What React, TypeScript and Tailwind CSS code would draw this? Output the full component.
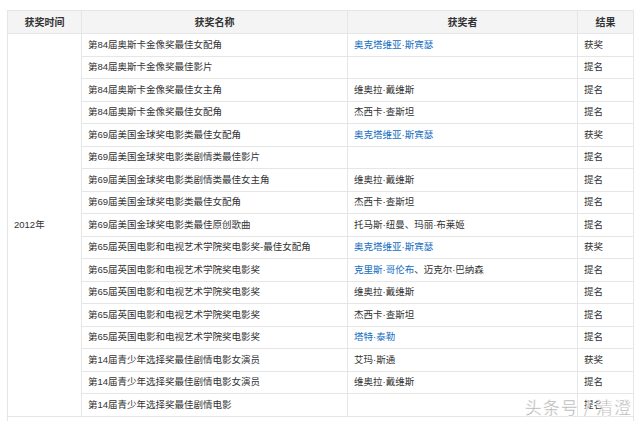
import React from 'react';

type Row = {
  award: string;
  winner?: React.ReactNode;
  result: string;
};

const Link: React.FC<{ children: React.ReactNode }> = ({ children }) => (
  <a className="text-[#136ec2] no-underline">{children}</a>
);

const rows: Row[] = [
  { award: '第84届奥斯卡金像奖最佳女配角', winner: <Link>奥克塔维亚·斯宾瑟</Link>, result: '获奖' },
  { award: '第84届奥斯卡金像奖最佳影片', result: '提名' },
  { award: '第84届奥斯卡金像奖最佳女主角', winner: '维奥拉·戴维斯', result: '提名' },
  { award: '第84届奥斯卡金像奖最佳女配角', winner: '杰西卡·查斯坦', result: '提名' },
  { award: '第69届美国金球奖电影类最佳女配角', winner: <Link>奥克塔维亚·斯宾瑟</Link>, result: '获奖' },
  { award: '第69届美国金球奖电影类剧情类最佳影片', result: '提名' },
  { award: '第69届美国金球奖电影类剧情类最佳女主角', winner: '维奥拉·戴维斯', result: '提名' },
  { award: '第69届美国金球奖电影类最佳女配角', winner: '杰西卡·查斯坦', result: '提名' },
  { award: '第69届美国金球奖电影类最佳原创歌曲', winner: '托马斯·纽曼、玛丽·布莱姬', result: '提名' },
  { award: '第65届英国电影和电视艺术学院奖电影奖-最佳女配角', winner: <Link>奥克塔维亚·斯宾瑟</Link>, result: '获奖' },
  {
    award: '第65届英国电影和电视艺术学院奖电影奖',
    winner: (
      <>
        <Link>克里斯·哥伦布</Link>、迈克尔·巴纳森
      </>
    ),
    result: '提名',
  },
  { award: '第65届英国电影和电视艺术学院奖电影奖', winner: '维奥拉·戴维斯', result: '提名' },
  { award: '第65届英国电影和电视艺术学院奖电影奖', winner: '杰西卡·查斯坦', result: '提名' },
  { award: '第65届英国电影和电视艺术学院奖电影奖', winner: <Link>塔特·泰勒</Link>, result: '提名' },
  { award: '第14届青少年选择奖最佳剧情电影女演员', winner: '艾玛·斯通', result: '获奖' },
  { award: '第14届青少年选择奖最佳剧情电影女演员', winner: '维奥拉·戴维斯', result: '提名' },
  { award: '第14届青少年选择奖最佳剧情电影', result: '提名' },
];

const cell = 'border border-[#e6e6e6] px-[6px] h-[22.5px] p-0 align-middle whitespace-nowrap';

export default function App() {
  return (
    <div
      className="relative w-[640px] h-[421px] overflow-hidden bg-white pt-[10px] pl-[7px] text-[9.5px] text-[#333]"
      style={{ fontFamily: '"Liberation Sans", "Noto Sans CJK SC", sans-serif' }}
    >
      <table className="border-collapse table-fixed w-[626px] border border-[#dcdcdc]">
        <colgroup>
          <col className="w-[74px]" />
          <col className="w-[266px]" />
          <col className="w-[230px]" />
          <col className="w-[56px]" />
        </colgroup>
        <thead>
          <tr className="bg-[#f4f4f4]">
            {['获奖时间', '获奖名称', '获奖者', '结果'].map((h) => (
              <th key={h} className="border border-[#e6e6e6] h-[23px] p-0 text-[10px] font-bold text-center">
                {h}
              </th>
            ))}
          </tr>
        </thead>
        <tbody>
          {rows.map((r, i) => (
            <tr key={i}>
              {i === 0 && (
                <td rowSpan={rows.length} className={cell}>
                  2012年
                </td>
              )}
              <td className={cell}>{r.award}</td>
              <td className={cell}>{r.winner}</td>
              <td className={cell}>{r.result}</td>
            </tr>
          ))}
          <tr>
            <td colSpan={4} className={cell}></td>
          </tr>
        </tbody>
      </table>

      <div
        className="absolute right-[8px] bottom-[2px] text-[17px] tracking-[1px] text-[#b0b0b0]"
        style={{ fontFamily: '"Noto Sans CJK SC", sans-serif', WebkitTextStroke: '0.4px #fff', textShadow: '0 0 2px #fff, 0 0 2px #fff' }}
      >
        头条号 / 清澄
      </div>
    </div>
  );
}
